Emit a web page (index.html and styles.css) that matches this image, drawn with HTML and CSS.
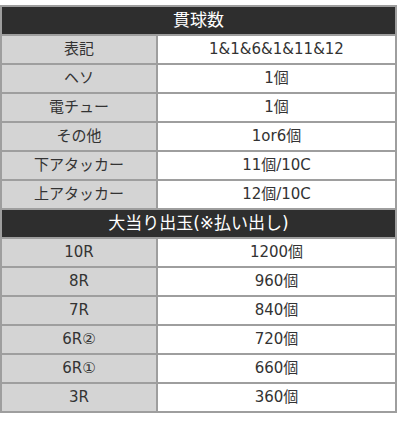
FILE: index.html
```html
<!DOCTYPE html>
<html lang="ja">
<head>
<meta charset="utf-8">
<link rel="stylesheet" href="styles.css">
</head>
<body>
<div class="wrap">
<table class="spec">
  <colgroup><col class="c-label"><col class="c-value"></colgroup>
  <tr><th colspan="2">貫球数</th></tr>
  <tr><td class="label">表記</td><td>1&amp;1&amp;6&amp;1&amp;11&amp;12</td></tr>
  <tr><td class="label">ヘソ</td><td>1個</td></tr>
  <tr><td class="label">電チュー</td><td>1個</td></tr>
  <tr><td class="label">その他</td><td>1or6個</td></tr>
  <tr><td class="label">下アタッカー</td><td>11個/10C</td></tr>
  <tr><td class="label">上アタッカー</td><td>12個/10C</td></tr>
  <tr><th colspan="2">大当り出玉(※払い出し)</th></tr>
  <tr><td class="label">10R</td><td>1200個</td></tr>
  <tr><td class="label">8R</td><td>960個</td></tr>
  <tr><td class="label">7R</td><td>840個</td></tr>
  <tr><td class="label">6R②</td><td>720個</td></tr>
  <tr><td class="label">6R①</td><td>660個</td></tr>
  <tr><td class="label">3R</td><td>360個</td></tr>
</table>
</div>
</body>
</html>
```

FILE: styles.css
```css
html, body {
  margin: 0;
  padding: 0;
  background: #ffffff;
}
.wrap {
  padding-top: 5px;
}
.spec {
  table-layout: fixed;
  width: 397px;
  border-collapse: separate;
  border-spacing: 2px;
  background: #9e9e9e;
  font-family: "DejaVu Sans", "Noto Sans CJK JP", sans-serif;
  font-size: 15px;
  color: #333333;
}
.c-label { width: 154px; }
.spec th,
.spec td {
  height: 27px;
  padding: 0;
  text-align: center;
  vertical-align: middle;
  line-height: 27px;
  white-space: nowrap;
}
.spec th {
  background: #2e2e2e;
  color: #ffffff;
  font-size: 17px;
  font-weight: normal;
}
.spec td {
  background: #ffffff;
}
.spec td.label {
  background: #d4d4d4;
}
```
